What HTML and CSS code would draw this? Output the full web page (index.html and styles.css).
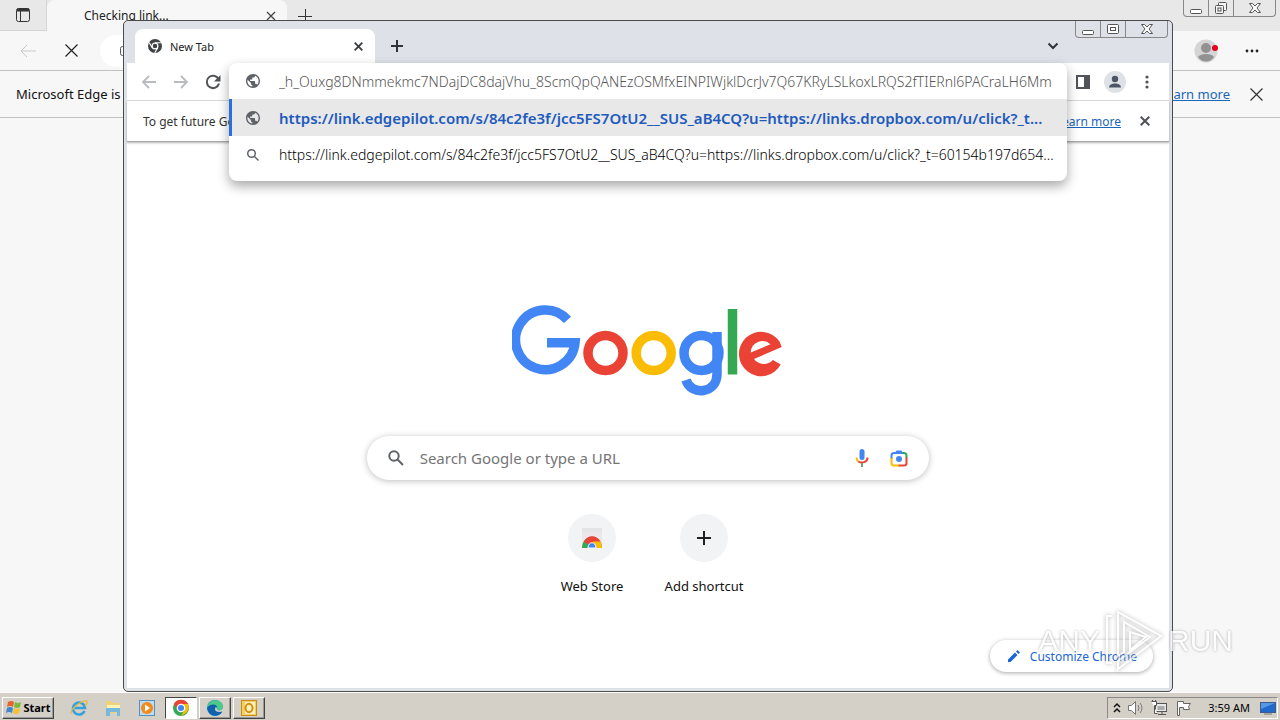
FILE: index.html
```html
<!DOCTYPE html>
<html lang="en">
<head>
<meta charset="utf-8">
<title>New Tab</title>
<link rel="stylesheet" href="styles.css">
</head>
<body>
<main class="desktop">
  <section class="edge">
    <div class="edge-tabs">
      <button class="edge-workspaces" aria-label="Tab actions"><svg width="16" height="16" viewBox="0 0 16 16" fill="none" stroke="#333"><rect x="1.5" y="1.5" width="13" height="13" rx="2"/><path d="M2 3h12" stroke-width="3"/><path d="M5.500 4v10"/></svg></button>
      <div class="edge-tab"><span class="edge-tab-title">Checking link...</span><button aria-label="Close tab"><svg width="10" height="10" viewBox="0 0 10 10" stroke="#444" stroke-width="1.300"><path d="M1 1l8 8M9 1l-8 8"/></svg></button></div>
      <button class="edge-new" aria-label="New tab"><svg width="14" height="14" viewBox="0 0 14 14" stroke="#333"><path d="M7.500 0v14M0 7.500h14"/></svg></button>
      <div class="caption edge-caption">
        <button aria-label="Minimize"><svg width="14" height="14" viewBox="0 0 14 14" fill="#fff" stroke="#555"><rect x="1.500" y="8.500" width="11" height="4" rx="1"/></svg></button>
        <button aria-label="Restore"><svg width="14" height="14" viewBox="0 0 14 14" fill="#f4f4f4" stroke="#555"><rect x="4.500" y="1.500" width="8" height="8" rx="1"/><rect x="1.500" y="4.500" width="8" height="8" rx="1"/><rect x="4" y="7" width="3" height="3"/></svg></button>
        <button class="wide" aria-label="Close"><svg width="14" height="14" viewBox="0 0 14 14" fill="#fff" stroke="#555"><path d="M1.500 2.500h3L7 5l2.500-2.500h3L9 7l3.500 4.500h-3L7 9l-2.500 2.500h-3L5 7z"/></svg></button>
      </div>
    </div>
    <div class="edge-toolbar">
      <button aria-label="Back"><svg width="16" height="14" viewBox="0 0 16 14" fill="none" stroke="#c8c8c8"><path d="M16 7H1M7 1L1 7l6 6"/></svg></button>
      <button class="edge-stop" aria-label="Stop"><svg width="13" height="13" viewBox="0 0 13 13" stroke="#222" stroke-width="1.200"><path d="M.5.5l12 12M12.500.5l-12 12"/></svg></button>
      <div class="edge-address"><svg width="12" height="12" viewBox="0 0 12 12" fill="none" stroke="#555"><rect x=".5" y="1.500" width="10" height="9" rx="2"/></svg></div>
      <button aria-label="Profile"><svg width="24" height="24" viewBox="0 0 24 24"><circle cx="12" cy="12" r="11.500" fill="#d5d5d5"/><circle cx="12" cy="9" r="5" fill="#929292"/><path d="M4 18c2-4 14-4 16 0-4 6-12 6-16 0z" fill="#929292"/><circle cx="21" cy="9" r="3" fill="#e3001b"/></svg></button>
      <button aria-label="Settings and more"><svg width="14" height="4" viewBox="0 0 14 4" fill="#222"><circle cx="2" cy="2" r="1.400"/><circle cx="7" cy="2" r="1.400"/><circle cx="12" cy="2" r="1.400"/></svg></button>
    </div>
    <div class="edge-infobar">
      <span class="grow">Microsoft Edge is</span>
      <a href="#">Learn more</a>
      <button aria-label="Dismiss"><svg width="13" height="13" viewBox="0 0 13 13" stroke="#333" stroke-width="1.200"><path d="M.5.5l12 12M12.500.5l-12 12"/></svg></button>
    </div>
  </section>

  <section class="chrome">
    <div class="strip">
      <div class="tab">
        <svg width="14" height="14" viewBox="0 0 16 16"><circle cx="8" cy="8" r="8" fill="#3f4246"/><circle cx="8" cy="8" r="3.300" fill="#3f4246" stroke="#fff" stroke-width="1.400"/><path d="M8 4.300h7M4.800 9.900L1.300 4M11.200 9.900L7.700 15.800" stroke="#fff" stroke-width="1.300"/></svg>
        <span class="tab-title">New Tab</span>
        <button aria-label="Close tab"><svg width="9" height="9" viewBox="0 0 9 9" stroke="#3c4043" stroke-width="1.900"><path d="M.7.7l7.600 7.600M8.300.7L.7 8.300"/></svg></button>
      </div>
      <button class="new-tab" aria-label="New tab"><svg width="12" height="12" viewBox="0 0 12 12" stroke="#303338" stroke-width="2"><path d="M6 0v12M0 6h12"/></svg></button>
      <button class="tab-search" aria-label="Search tabs"><svg width="12" height="8" viewBox="0 0 12 8" fill="none" stroke="#303338" stroke-width="2"><path d="M1.500 1.500L6 6l4.500-4.500"/></svg></button>
      <div class="caption">
        <button aria-label="Minimize"><svg width="14" height="14" viewBox="0 0 14 14" fill="#fff" stroke="#555"><rect x="1.500" y="8.500" width="11" height="4" rx="1"/></svg></button>
        <button aria-label="Maximize"><svg width="14" height="14" viewBox="0 0 14 14" fill="#fff" stroke="#555"><rect x="1.500" y="2.500" width="11" height="9" rx="1"/><rect x="4.500" y="5.500" width="5" height="3"/></svg></button>
        <button class="wide" aria-label="Close"><svg width="14" height="14" viewBox="0 0 14 14" fill="#fff" stroke="#555"><path d="M1.500 2.500h3L7 5l2.500-2.500h3L9 7l3.500 4.500h-3L7 9l-2.500 2.500h-3L5 7z"/></svg></button>
      </div>
    </div>
    <div class="toolbar">
      <button aria-label="Back"><svg width="16" height="14" viewBox="0 0 16 14" fill="none" stroke="#b9bbbe" stroke-width="1.800"><path d="M15 7H2M8 1L2 7l6 6"/></svg></button>
      <button aria-label="Forward"><svg width="16" height="14" viewBox="0 0 16 14" fill="none" stroke="#b9bbbe" stroke-width="1.800"><path d="M1 7h13M8 1l6 6-6 6"/></svg></button>
      <button aria-label="Reload"><svg width="16" height="16" viewBox="0 0 16 16" fill="none"><path d="M13.500 5A6.200 6.200 0 1 0 14 9.500" stroke="#505357" stroke-width="2"/><path d="M15.500 1v6.500H9z" fill="#505357"/></svg></button>
      <div class="grow"></div>
      <button class="side-panel" aria-label="Side panel"><svg width="14" height="14" viewBox="0 0 14 14"><path d="M0 0h14v14H0zM2 2v10h6V2z" fill="#505357" fill-rule="evenodd"/></svg></button>
      <button class="profile" aria-label="Profile"><svg width="22" height="22" viewBox="0 0 22 22"><circle cx="11" cy="11" r="11" fill="#dee1e6"/><circle cx="11" cy="8" r="3.200" fill="#4b5563"/><path d="M5 16.500c0-5.500 12-5.500 12 0z" fill="#4b5563"/></svg></button>
      <button aria-label="Menu"><svg width="4" height="14" viewBox="0 0 4 14" fill="#505357"><circle cx="2" cy="2" r="1.600"/><circle cx="2" cy="7" r="1.600"/><circle cx="2" cy="12" r="1.600"/></svg></button>
      <div class="omnibox">
        <label class="row first">
          <svg width="14" height="14" viewBox="2 2 20 20"><path d="M12 2C6.480 2 2 6.480 2 12s4.480 10 10 10 10-4.480 10-10S17.520 2 12 2zM4 12c0-.61.08-1.210.21-1.780L8.990 15v1c0 1.100.9 2 2 2v1.930C7.060 19.430 4 16.070 4 12zm13.890 5.400c-.26-.81-1-1.400-1.900-1.400h-1v-3c0-.55-.45-1-1-1h-6v-2h2c.55 0 1-.45 1-1V7h2c1.100 0 2-.9 2-2v-.41C17.920 5.770 20 8.650 20 12c0 2.080-.81 3.980-2.110 5.400z" fill="#5f6368"/></svg>
          <input type="text" aria-label="Address" value="_h_Ouxg8DNmmekmc7NDajDC8dajVhu_8ScmQpQANEzOSMfxEINPIWjklDcrJv7Q67KRyLSLkoxLRQS2fTIERnl6PACraLH6Mm">
        </label>
        <div class="row selected">
          <svg width="14" height="14" viewBox="2 2 20 20"><path d="M12 2C6.480 2 2 6.480 2 12s4.480 10 10 10 10-4.480 10-10S17.520 2 12 2zM4 12c0-.61.08-1.210.21-1.780L8.990 15v1c0 1.100.9 2 2 2v1.930C7.060 19.430 4 16.070 4 12zm13.890 5.400c-.26-.81-1-1.400-1.900-1.400h-1v-3c0-.55-.45-1-1-1h-6v-2h2c.55 0 1-.45 1-1V7h2c1.100 0 2-.9 2-2v-.41C17.920 5.770 20 8.650 20 12c0 2.080-.81 3.980-2.110 5.400z" fill="#5f6368"/></svg>
          <span>https://link.edgepilot.com/s/84c2fe3f/jcc5FS7OtU2__SUS_aB4CQ?u=https://links.dropbox.com/u/click?_t...</span>
        </div>
        <div class="row">
          <svg width="14" height="14" viewBox="0 0 14 14" fill="none" stroke="#5f6368" stroke-width="1.500"><circle cx="5.500" cy="5.500" r="3.800"/><path d="M8.500 8.500l4 4"/></svg>
          <span class="light">https://link.edgepilot.com/s/84c2fe3f/jcc5FS7OtU2__SUS_aB4CQ?u=https://links.dropbox.com/u/click?_t=60154b197d654...</span>
        </div>
      </div>
    </div>
    <div class="infobar">
      <span class="grow">To get future Google</span>
      <a href="#">Learn more</a>
      <button aria-label="Dismiss"><svg width="10" height="10" viewBox="0 0 10 10" stroke="#505357" stroke-width="2"><path d="M.7.7l8.600 8.600M9.300.7L.7 9.300"/></svg></button>
    </div>
    <div class="ntp">
      <svg class="logo" role="img" aria-label="Google" width="272" height="92" viewBox="512 305 272 92" fill="none" stroke-width="9.500">
        <path d="M567.500 319.900A29.800 29.800 0 1 0 575 342.700H547" stroke="#4285f4"/>
        <circle cx="605.500" cy="353" r="17.500" stroke="#ea4335"/>
        <circle cx="653.700" cy="353" r="17.500" stroke="#fbbc05"/>
        <g stroke="#4285f4"><circle cx="701.500" cy="353" r="17.500"/><path d="M717 332v42c0 20-26 22-31 6"/></g>
        <path d="M732.500 309v65.500" stroke="#34a853"/>
        <path d="M781.700 347L754 359A12.500 12.500 0 0 0 773 360L780.700 364.500A22.200 22.200 0 1 1 779.500 341.500zM750.700 352.500L770.500 344.300A11.800 11.800 0 0 0 750.700 352.500z" fill="#ea4335" fill-rule="evenodd"/>
      </svg>
      <label class="search">
        <svg width="16" height="16" viewBox="0 0 16 16" fill="none" stroke="#5f6368" stroke-width="2"><circle cx="6" cy="6" r="4.700"/><path d="M9.500 9.500l5.500 5.500"/></svg>
        <input type="text" aria-label="Search" placeholder="Search Google or type a URL">
        <button aria-label="Search by voice"><svg width="14" height="20" viewBox="0 0 14 20" fill="none" stroke-width="2"><rect x="4.500" y="1" width="5" height="11" rx="2.500" fill="#4285f4"/><path d="M1.500 9.500c0 2 1 3.500 2.500 4.500" stroke="#fbbc05"/><path d="M3.500 13.500c3 2 9 1 9-4" stroke="#ea4335"/><path d="M7 15v4" stroke="#7b9a80"/></svg></button>
        <button aria-label="Search by image"><svg width="18" height="18" viewBox="0 0 18 18" fill="none" stroke-width="2"><path d="M1.500 10V6.500Q1.500 4 4 4h3" stroke="#4285f4"/><path d="M11 4h3q2.500 0 2.500 2.500V9" stroke="#34a853"/><path d="M16.500 8.500V14q0 2.500-2.500 2.500H8" stroke="#ea4335"/><path d="M1.500 9v5q0 2.500 2.500 2.500h5" stroke="#fbbc05"/><path d="M4.500 5l2-3.500h5l2 3.500z" fill="#4285f4"/><circle cx="9" cy="10" r="3" fill="#4285f4"/></svg></button>
      </label>
      <div class="tiles">
        <a class="tile" href="#"><span class="disc"><svg width="20" height="20" viewBox="0 0 20 20"><path d="M0 0h20v20H0z" fill="#ece6ec"/><path d="M0 0h20v4H0z" fill="#e4e4e6"/><path d="M0 20c0-15 20-15 20 0z" fill="#34a853"/><path d="M2 13.500c4-7 12-7 16.500 0L10 16H5z" fill="#ea4335"/><path d="M18.500 13.500q1.500 2.500 1.500 6.500h-8l-1-6.500z" fill="#fbbc05"/><path d="M6 20c0-7 8-7 8 0z" fill="#4285f4" stroke="#fff"/></svg></span><span>Web Store</span></a>
        <button class="tile"><span class="disc"><svg width="14" height="14" viewBox="0 0 14 14" stroke="#202124" stroke-width="2"><path d="M7 0v14M0 7h14"/></svg></span><span>Add shortcut</span></button>
      </div>
      <button class="customize"><svg width="12" height="12" viewBox="0 0 12 12" fill="#1a66d8"><path d="M0 9.500L7 2.500 9.500 5l-7 7H0zM8 1.500L9.500 0 12 2.500 10.500 4z"/></svg>Customize Chrome</button>
    </div>
  </section>

  <div class="watermark">
    <span>ANY</span>
    <svg width="60" height="66" viewBox="0 0 60 66" fill="none" stroke="#fff" stroke-width="2"><path d="M14 4L57 28 14 61v-8L46 29 20 14v30l-6 4zM8 8H3v47h5M26 24v18l16-13z"/></svg>
    <span>RUN</span>
  </div>
</main>

<footer class="taskbar">
  <button class="start"><svg width="18" height="18" viewBox="0 0 18 18"><path d="M3 3q3-2 6 0L8 8Q5 6 2 8z" fill="#e8622c"/><path d="M10 3q3 2 6 0l-1 5q-3 2-6 0z" fill="#7eb83b"/><path d="M2 9q3-2 6 0l-1 5q-3-2-6 0z" fill="#3d86d0"/><path d="M9 9q3 2 6 0l-1 5q-3 2-6 0z" fill="#f6c12d"/></svg>Start</button>
  <nav class="apps">
    <button class="app" aria-label="Internet Explorer"><svg width="18" height="18" viewBox="0 0 18 18" fill="none"><path d="M14.500 12A6 6 0 1 1 15 9H5" stroke="#35a0dc" stroke-width="2.600"/><path d="M1 15C0 10 12 1 17 2c1 2-1 4-2 5" stroke="#e9b93a" stroke-width="1.300"/></svg></button>
    <button class="app" aria-label="Explorer"><svg width="18" height="18" viewBox="0 0 18 18"><path d="M2 2h6l1 2h7v10H2z" fill="#eed27a"/><path d="M3 6h13v3H3z" fill="#fff3ba"/><path d="M2 9h14v8h-3v-4H6v4H2z" fill="#76b9dd"/></svg></button>
    <button class="app" aria-label="Media Player"><svg width="18" height="18" viewBox="0 0 18 18"><rect x="1.500" y="1.500" width="15" height="15" fill="#bcdcf2" stroke="#5692bd"/><circle cx="9" cy="9" r="6" fill="#f28a1c"/><path d="M7 5.500l5 3.500-5 3.500z" fill="#fff"/></svg></button>
    <button class="app active" aria-label="Chrome"><svg width="18" height="18" viewBox="0 0 18 18"><circle cx="9" cy="9" r="8" fill="#34a853"/><path d="M2 5a8 8 0 0 1 14 0l-7 4-4 1z" fill="#ea4335"/><path d="M9 5h7q3 8-7 12l4-7z" fill="#fbbc05"/><circle cx="9" cy="9" r="3.700" fill="#4285f4" stroke="#fff" stroke-width="1.300"/></svg></button>
    <button class="app open" aria-label="Edge"><svg width="18" height="18" viewBox="0 0 18 18"><circle cx="9" cy="9" r="8" fill="#1689d2"/><path d="M1 9C2-1 17-1 17 8c0 4-5 4-6 2 1-5-6-6-10-1z" fill="#4dc98a"/><path d="M1 9c3-5 10-4 10-1-3 0-3 6 5 5-2 4-12 7-15-4z" fill="#1261ad"/><path d="M10 8c-2 2-1 5 4 5l3-1v-3c-1 3-6 3-6 1z" fill="#d4d0c8"/></svg></button>
    <button class="app open" aria-label="Outlook"><svg width="18" height="18" viewBox="0 0 18 18"><rect x="1.500" y="1.500" width="15" height="15" fill="#f6cf63" stroke="#c98b13"/><path d="M5 3h10v12H5z" fill="#fff0bc"/><ellipse cx="9" cy="9" rx="3.500" ry="4.200" fill="none" stroke="#d08e11" stroke-width="2"/></svg></button>
  </nav>
  <div class="tray">
    <svg width="8" height="12" viewBox="0 0 8 12" fill="none" stroke="#111" stroke-width="1.500"><path d="M1 5l3-3 3 3M1 10l3-3 3 3"/></svg>
    <svg width="18" height="16" viewBox="0 0 18 16" fill="#fff" stroke="#777"><path d="M1.500 5.500h3l4-4v13l-4-4h-3z"/><path d="M11 5q2 3 0 6M13 3q4 5 0 10" fill="none"/></svg>
    <svg width="18" height="16" viewBox="0 0 18 16" fill="#e9e9e9" stroke="#555"><rect x="4.500" y="3.500" width="11" height="8"/><path d="M6.500 6h7v4h-7z" fill="#aaa" stroke="none"/><path d="M7 14.500h8M11 12v2"/><path d="M.5 1.500h5v4h-2v8h3M1.500 0v2M4.500 0v2" fill="#fff"/></svg>
    <svg width="18" height="16" viewBox="0 0 18 16" fill="#fff" stroke="#666"><path d="M2.500 15.500v-14h6v2h7l-2 3 1 3h-6v-2h-4v8z"/></svg>
    <time>3:59 AM</time>
    <svg width="16" height="14" viewBox="0 0 16 14"><rect x=".5" y="1.500" width="15" height="10" fill="#2269cc" stroke="#405c8c"/><path d="M1 2h14L1 8z" fill="#5598e8"/><path d="M4 13h8" stroke="#777"/></svg>
  </div>
</footer>
</body>
</html>
```
FILE: styles.css
```css
* { box-sizing: border-box; }
html, body { height: 100%; margin: 0; }
body {
  display: flex;
  flex-direction: column;
  overflow: hidden;
  font-family: "Noto Sans", sans-serif;
  font-size: 13px;
  color: #222;
}
button {
  display: flex;
  align-items: center;
  justify-content: center;
  padding: 0;
  border: 0;
  background: none;
  font: inherit;
  color: inherit;
}
input { font: inherit; color: inherit; border: 0; padding: 0; background: none; outline: 0; min-width: 0; flex: 1; }
svg { flex: none; display: block; }
a { color: #1a66b8; }
.grow { flex: 1; }

.desktop { position: relative; flex: 1; min-height: 0; background: #f7f7f7; }

.edge-tabs { display: flex; height: 31px; background: #e8e8e8; }
.edge-workspaces { width: 47px; border-right: 1px solid #d6d6d6; border-bottom: 1px solid #d6d6d6; }
.edge-tab { display: flex; align-items: center; width: 240px; padding: 0 11px 0 37px; background: #f7f7f7; border-radius: 8px 8px 0 0; }
.edge-tab-title { flex: 1; font-size: 12px; }
.edge-new { width: 35px; }
.caption { display: flex; height: 17px; margin-left: auto; border: 1px solid #888; border-top: 0; border-radius: 0 0 4px 4px; }
.caption button { width: 25px; border-right: 1px solid #888; }
.caption .wide { width: 41px; border: 0; }
.edge-caption { margin-right: 4px; }
.edge-toolbar { display: flex; align-items: center; height: 40px; padding: 0 21px 0 20px; gap: 27px; border-bottom: 1px solid #c2c2c2; }
.edge-stop { margin-left: 2px; }
.edge-address { display: flex; align-items: center; flex: 1; height: 32px; margin-left: -5px; margin-right: 40px; padding-left: 20px; border-radius: 16px; background: #fff; }
.edge-infobar { display: flex; align-items: center; height: 47px; padding: 0 17px 0 16px; border-bottom: 1px solid #c2c2c2; color: #111; }
.edge-infobar button { margin-left: 20px; }

.chrome {
  position: absolute;
  inset: 20px 107px 0 123px;
  display: flex;
  flex-direction: column;
  border: 1px solid #4a4c4c;
  border-radius: 5px;
  background: #dee2e8;
  padding: 0 3px 3px;
}
.strip { display: flex; height: 42px; padding: 0 1px 0 8px; background: #dee1e8; }
.tab { display: flex; align-items: center; width: 240px; height: 34px; margin-top: 8px; padding: 0 12px 0 13px; background: #fff; border-radius: 8px 8px 0 0; font-size: 11px; }
.tab-title { flex: 1; margin-left: 8px; }
.new-tab { width: 44px; height: 34px; margin-top: 8px; }
.tab-search { width: 44px; height: 34px; margin: 8px 0 0 auto; }
.strip .caption { margin-left: 0; }
.toolbar { position: relative; display: flex; align-items: center; height: 38px; padding: 0 20px 0 14px; gap: 16px; background: #fff; border-bottom: 1px solid #d9dbde; }
.toolbar > button { height: 24px; }
.side-panel { margin-right: -2px; }
.profile { margin-right: 3px; }
.omnibox {
  position: absolute;
  z-index: 2;
  top: 0;
  left: 102px;
  right: 102px;
  padding-bottom: 8px;
  border-radius: 8px;
  background: #fff;
  box-shadow: 0 5px 12px rgba(0, 0, 0, .35);
  overflow: hidden;
  font-size: 14px;
}
.row { display: flex; align-items: center; gap: 19px; height: 37px; padding: 0 8px 0 17px; white-space: nowrap; color: #000; }
.first { height: 36px; }
.row input { color: #555; font-weight: 300; }
.light { font-weight: 300; }
.selected { padding-left: 14px; border-left: 3px solid #2a6fdb; background: #e8e8e8; color: #1f5bbd; font-size: 15px; font-weight: 600; }
.infobar { display: flex; align-items: center; height: 41px; padding: 0 19px 0 16px; background: #fff; border-bottom: 1px solid #aaa; box-shadow: 0 1px 2px rgba(0, 0, 0, .3); z-index: 1; font-size: 12px; color: #333; }
.infobar button { margin-left: 19px; }

.ntp { position: relative; display: flex; flex: 1; flex-direction: column; align-items: center; padding-top: 163px; background: #fff; }
.search { display: flex; align-items: center; width: 54%; height: 44px; margin-top: 39px; padding: 0 21px; border-radius: 22px; background: #fff; box-shadow: 0 1px 6px rgba(32, 33, 36, .3); color: #666; font-size: 15px; }
.search input { margin-left: 16px; }
.search input::placeholder { color: #757575; }
.search button { margin-left: 21px; }
.tiles { display: flex; margin-top: 34px; }
.tile { display: flex; flex-direction: column; align-items: center; gap: 15px; width: 112px; color: #111; text-decoration: none; }
.disc { display: flex; align-items: center; justify-content: center; width: 48px; height: 48px; border-radius: 50%; background: #f1f3f4; }
.customize { position: absolute; right: 16px; bottom: 16px; gap: 10px; height: 32px; padding: 0 16px 0 18px; border-radius: 16px; background: #fff; box-shadow: 0 1px 4px rgba(0, 0, 0, .35); color: #1a66d8; font-size: 12px; }

.watermark { position: absolute; right: 47px; bottom: 18px; display: flex; align-items: center; gap: 4px; opacity: .7; color: #fff; font: 30px "Liberation Sans", sans-serif; text-shadow: 0 0 3px #888; pointer-events: none; }
.watermark svg { filter: drop-shadow(0 0 2px #888); }

.taskbar { display: flex; align-items: center; height: 28px; padding: 2px 2px 0; background: #d4d0c8; border-top: 1px solid #fff; }
.start { width: 52px; height: 22px; border: 1px solid; border-color: #fff #444 #444 #fff; box-shadow: inset -1px -1px #999; color: #000; font-size: 11px; font-weight: 700; }
.apps { display: flex; gap: 2px; margin-left: 9px; }
.app { width: 32px; height: 22px; }
.open { border: 1px solid; border-color: #fff #444 #444 #fff; box-shadow: inset -1px -1px #999; }
.active { border: 1px solid; border-color: #444 #fff #fff #444; background: #fff; }
.tray { display: flex; align-items: center; gap: 6px; height: 22px; margin-left: auto; padding: 0 1px 0 5px; border: 1px solid; border-color: #888 #fff #fff #888; font-size: 11px; color: #000; }
.tray time { margin: 0 4px 0 9px; }
```
